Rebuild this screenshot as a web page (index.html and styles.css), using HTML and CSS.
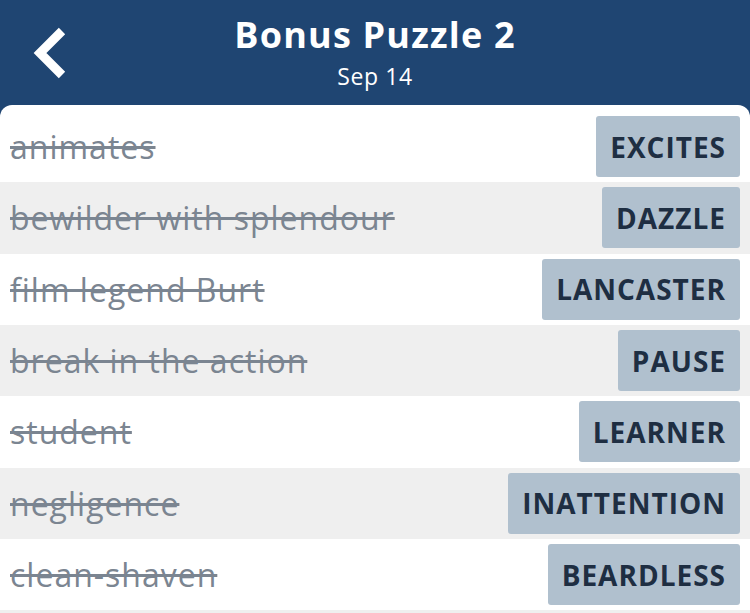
FILE: index.html
```html
<!DOCTYPE html>
<html lang="en">
<head>
  <meta charset="UTF-8">
  <title>Bonus Puzzle 2</title>
  <link rel="stylesheet" href="styles.css">
</head>
<body>

  <header class="kopf">
    <a class="zurueck" href="#">
      <svg width="40" height="56" viewBox="0 0 40 56">
        <path d="M33 6 L11 28 L33 50" fill="none" stroke="#fff" stroke-width="9" stroke-linecap="butt" stroke-linejoin="miter"/>
      </svg>
    </a>
    <h1>Bonus Puzzle 2</h1>
    <p class="datum">Sep 14</p>
  </header>

  <ul class="liste">
    <li><span class="hinweis">animates</span><span class="antwort">EXCITES</span></li>
    <li><span class="hinweis">bewilder with splendour</span><span class="antwort">DAZZLE</span></li>
    <li><span class="hinweis">film legend Burt</span><span class="antwort">LANCASTER</span></li>
    <li><span class="hinweis">break in the action</span><span class="antwort">PAUSE</span></li>
    <li><span class="hinweis">student</span><span class="antwort">LEARNER</span></li>
    <li><span class="hinweis">negligence</span><span class="antwort">INATTENTION</span></li>
    <li><span class="hinweis">clean-shaven</span><span class="antwort">BEARDLESS</span></li>
    <li class="rest"></li>
  </ul>

</body>
</html>
```

FILE: styles.css
```css
body {
  margin: 0;
  background-color: #1f4572;
  font-family: "Open Sans", sans-serif;
  overflow: hidden;
}

.kopf {
  position: relative;
  height: 105px;
  color: white;
  text-align: center;
}

.zurueck {
  position: absolute;
  left: 29px;
  top: 25px;
}

.kopf h1 {
  margin: 0;
  padding-top: 12px;
  font-size: 36px;
  font-weight: bold;
  letter-spacing: 1.2px;
  line-height: 46px;
}

.datum {
  margin: 0;
  padding-top: 3px;
  font-size: 23px;
  letter-spacing: 0.6px;
  line-height: 30px;
}

.liste {
  list-style-type: none;
  margin: 0;
  padding: 6px 0 0;
  background: white;
  border-radius: 12px 12px 0 0;
}

.liste li {
  display: flex;
  align-items: center;
  justify-content: space-between;
  height: 71.33px;
  padding: 0 10px;
  box-sizing: border-box;
}

.liste li:nth-child(even) {
  background-color: #efefef;
}

.liste li.rest {
  height: 4px;
}

.hinweis {
  font-size: 32px;
  letter-spacing: 1px;
  color: #7b8591;
  text-decoration: line-through;
}

.antwort {
  display: flex;
  align-items: center;
  height: 61px;
  padding: 0 14px;
  background-color: #b0c0ce;
  border-radius: 3px;
  font-size: 28px;
  font-weight: bold;
  letter-spacing: 1px;
  color: #1e2e42;
}
```
